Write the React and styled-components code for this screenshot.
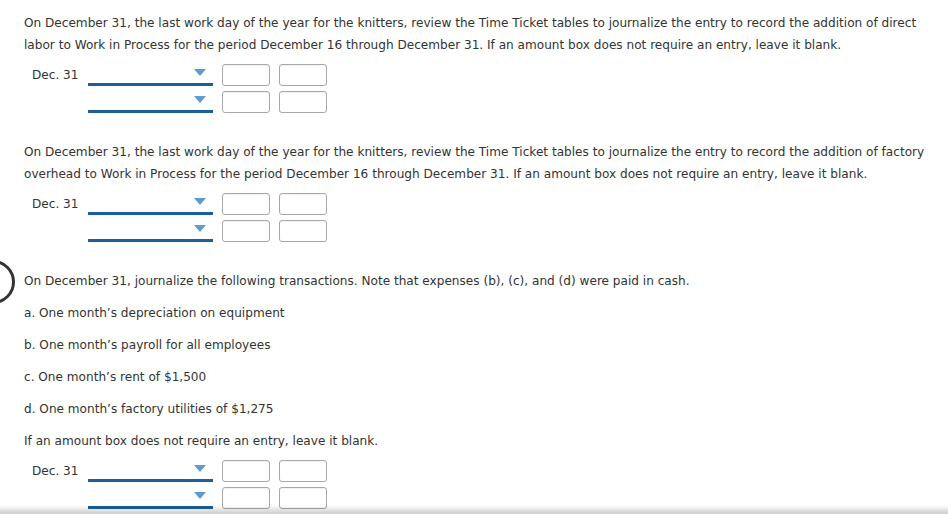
import styled, { createGlobalStyle } from "styled-components";

const Global = createGlobalStyle`
  html, body {
    margin: 0;
    padding: 0;
    background: #fff;
    overflow: hidden;
  }
  body {
    font-family: Verdana, "DejaVu Sans", sans-serif;
    font-size: 12.1px;
    color: #333;
  }
`;

const Page = styled.div`
  position: relative;
  padding: 12px 0 0 24px;
`;

const Section = styled.section`
  margin-bottom: 28px;
`;

const Para = styled.p`
  margin: 0;
  line-height: 22px;
  white-space: nowrap;
  margin-bottom: ${(p) => p.$gap || 0}px;
`;

const Entry = styled.div`
  display: flex;
  flex-direction: column;
  gap: 5px;
  margin-top: 8px;
  padding-left: 8px;
`;

const Row = styled.div`
  display: flex;
  align-items: center;
  height: 22px;
`;

const Label = styled.span`
  width: 56px;
  line-height: 22px;
`;

const Select = styled.div`
  position: relative;
  width: 125px;
  height: 22px;
  margin-right: 9px;
  box-sizing: border-box;
  border-bottom: 3px solid #1c5f99;
  &::after {
    content: "";
    position: absolute;
    right: 7px;
    top: 5px;
    border-left: 6px solid transparent;
    border-right: 6px solid transparent;
    border-top: 7px solid #5b9bd1;
  }
`;

const Amount = styled.div`
  width: 48px;
  height: 22px;
  box-sizing: border-box;
  border: 1px solid #a8a8a8;
  border-radius: 3px;
  margin-right: 9px;
  box-shadow: inset 0 1px 1px rgba(0, 0, 0, 0.06);
`;

const Ring = styled.div`
  position: absolute;
  left: -29px;
  top: 260px;
  width: 38px;
  height: 38px;
  border: 3px solid #333;
  border-radius: 50%;
`;

const Shade = styled.div`
  position: fixed;
  left: 0;
  right: 0;
  bottom: 0;
  height: 9px;
  background: linear-gradient(to bottom, rgba(0, 0, 0, 0), rgba(0, 0, 0, 0.2));
`;

function JournalEntry() {
  return (
    <Entry>
      <Row>
        <Label>Dec. 31</Label>
        <Select />
        <Amount />
        <Amount />
      </Row>
      <Row>
        <Label />
        <Select />
        <Amount />
        <Amount />
      </Row>
    </Entry>
  );
}

export default function App() {
  return (
    <>
      <Global />
      <Page>
        <Section>
          <Para>
            On December 31, the last work day of the year for the knitters, review the Time Ticket tables to journalize the entry to record the addition of direct
            <br />
            labor to Work in Process for the period December 16 through December 31. If an amount box does not require an entry, leave it blank.
          </Para>
          <JournalEntry />
        </Section>
        <Section>
          <Para>
            On December 31, the last work day of the year for the knitters, review the Time Ticket tables to journalize the entry to record the addition of factory
            <br />
            overhead to Work in Process for the period December 16 through December 31. If an amount box does not require an entry, leave it blank.
          </Para>
          <JournalEntry />
        </Section>
        <Ring />
        <Section>
          <Para $gap={10}>
            On December 31, journalize the following transactions. Note that expenses (b), (c), and (d) were paid in cash.
          </Para>
          <Para $gap={10}>a. One month’s depreciation on equipment</Para>
          <Para $gap={10}>b. One month’s payroll for all employees</Para>
          <Para $gap={10}>c. One month’s rent of $1,500</Para>
          <Para $gap={10}>d. One month’s factory utilities of $1,275</Para>
          <Para>If an amount box does not require an entry, leave it blank.</Para>
          <JournalEntry />
        </Section>
      </Page>
      <Shade />
    </>
  );
}
